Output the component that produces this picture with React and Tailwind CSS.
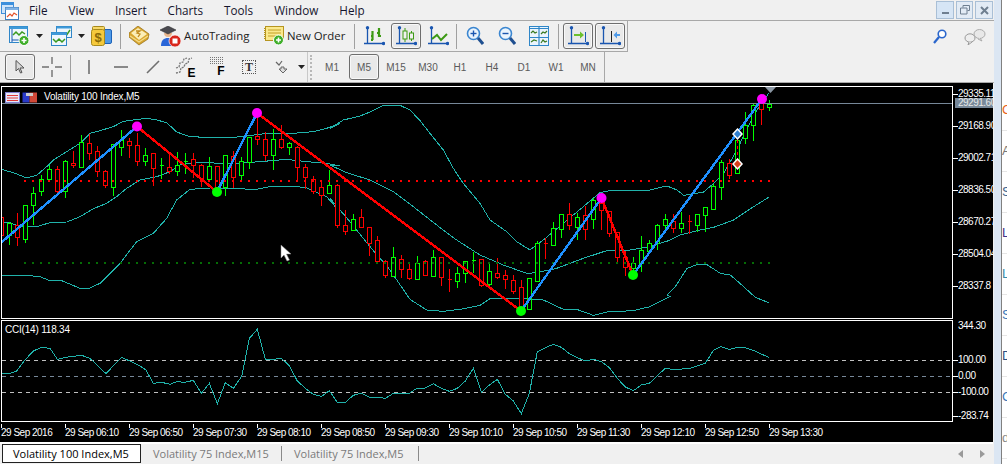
const UI_FONT = "font-['Open_Sans','Noto_Sans',sans-serif]";
const AXIS_FONT = "font-['Liberation_Sans',Arial,sans-serif]";

// chart data was read off 3x crops, so helpers map it back to page pixels
const zp = (pts, ox, oy) => pts.map(([x, y]) => `${ox + x / 3},${oy + y / 3}`).join(" ");

const candleRows = [
  ["r", 352, 352, 404, 404], ["g", 364, 370, 404, 432], ["r", 336, 374, 412, 434], ["g", 312, 314, 416, 426],
  ["g", 258, 280, 314, 372], ["g", 222, 238, 274, 284], ["g", 192, 208, 236, 240], ["r", 196, 208, 274, 280],
  ["g", 176, 184, 274, 290], ["r", 150, 188, 194, 200], ["g", 102, 126, 200, 200], ["r", 100, 130, 160, 176],
  ["r", 136, 154, 212, 228], ["r", 208, 214, 254, 260], ["g", 128, 132, 262, 286], ["g", 88, 120, 142, 164],
  ["r", 112, 122, 136, 170], ["r", 96, 134, 184, 194], ["g", 142, 164, 184, 196], ["r", 160, 160, 204, 254],
  ["g", 170, 196, 200, 234], ["r", 160, 200, 212, 218], ["g", 154, 196, 212, 226], ["g", 156, 182, 186, 220],
  ["r", 156, 178, 196, 230], ["r", 190, 196, 234, 258], ["g", 168, 198, 236, 240], ["r", 198, 198, 262, 270],
  ["g", 162, 166, 260, 284], ["r", 150, 168, 230, 262], ["g", 168, 182, 224, 240], ["g", 108, 110, 186, 204],
  ["r", 40, 108, 116, 132], ["r", 94, 118, 166, 180], ["g", 84, 118, 164, 206], ["r", 72, 118, 142, 144],
  ["g", 124, 130, 140, 162], ["r", 134, 140, 202, 244], ["r", 190, 202, 232, 264], ["r", 224, 236, 272, 278],
  ["r", 238, 262, 284, 316], ["g", 208, 256, 280, 280], ["r", 250, 256, 374, 380],
  ["r", 328, 376, 392, 402], ["g", 340, 356, 390, 390], ["r", 324, 350, 382, 382], ["r", 378, 382, 428, 464],
  ["r", 406, 420, 484, 484], ["r", 478, 482, 526, 532], ["g", 438, 472, 528, 528], ["r", 462, 476, 508, 530],
  ["r", 490, 508, 534, 538], ["g", 466, 490, 536, 536], ["r", 478, 484, 524, 526], ["g", 446, 472, 528, 528],
  ["r", 468, 472, 532, 556], ["r", 504, 538, 541, 572], ["g", 498, 520, 544, 562], ["g", 482, 484, 518, 546],
  ["g", 452, 480, 482, 516], ["r", 478, 478, 554, 558], ["g", 488, 514, 552, 556], ["r", 472, 518, 530, 534],
  ["r", 506, 526, 536, 564], ["r", 522, 540, 572, 578], ["r", 536, 562, 624, 634], ["g", 532, 534, 626, 626],
  ["g", 420, 430, 542, 542], ["r", 412, 430, 434, 474], ["g", 364, 384, 436, 436], ["g", 340, 342, 386, 410],
  ["r", 306, 342, 376, 386], ["g", 336, 350, 380, 418], ["r", 316, 346, 388, 416], ["g", 290, 300, 356, 384],
  ["r", 296, 310, 330, 388], ["r", 330, 332, 398, 408], ["r", 394, 396, 472, 488], ["r", 450, 472, 502, 526],
  ["g", 468, 490, 504, 516], ["g", 406, 450, 490, 512], ["g", 418, 428, 454, 458], ["g", 370, 376, 428, 446],
  ["g", 338, 358, 374, 388],
  ["r", 340, 362, 384, 396], ["g", 334, 370, 384, 396], ["r", 342, 362, 365, 398], ["g", 340, 342, 374, 392],
  ["g", 318, 320, 344, 392], ["g", 250, 258, 326, 326], ["g", 176, 186, 262, 296], ["r", 174, 190, 224, 234],
  ["g", 118, 120, 220, 220], ["g", 32, 76, 114, 128], ["g", 10, 16, 76, 120], ["r", 6, 6, 28, 72],
  ["g", -3, 12, 22, 30],
];

const bands = [
  [[4, 208], [40, 218], [80, 234], [110, 226], [140, 200], [160, 180], [200, 155], [240, 130], [270, 100], [300, 92], [340, 80], [370, 64], [400, 60], [440, 55], [470, 60], [500, 68], [530, 96], [570, 110], [620, 112], [700, 112], [740, 108], [800, 100], [880, 100], [940, 95], [980, 85], [1020, 70]],
  [[4, 366], [30, 368], [60, 380], [110, 380], [150, 368], [200, 366], [240, 350], [280, 326], [320, 310], [350, 290], [380, 265], [420, 240], [470, 230], [510, 215], [540, 195], [580, 188], [700, 190], [780, 185], [860, 178], [920, 185], [980, 190], [1020, 198]],
  [[4, 526], [40, 528], [80, 526], [120, 530], [150, 542], [180, 540], [240, 565], [270, 564], [300, 550], [360, 490], [410, 425], [460, 400], [500, 355], [530, 300], [570, 268], [630, 264], [700, 266], [770, 268], [810, 260], [880, 258], [920, 264], [980, 290], [1010, 325], [1020, 345]],
];
const bandsMid = [
  [[0, 85], [40, 60], [90, 48], [120, 36], [160, 16], [210, 16], [240, 30], [270, 62], [300, 100], [340, 150], [370, 205], [400, 250], [450, 310], [480, 360], [530, 395], [560, 425], [600, 450], [640, 420], [700, 370], [760, 320], [810, 278], [850, 270], [960, 270], [1000, 260], [1020, 260]],
  [[0, 195], [50, 218], [120, 240], [190, 275], [250, 320], [320, 375], [380, 420], [450, 465], [520, 495], [590, 520], [620, 518], [680, 505], [760, 475], [830, 452], [900, 450], [960, 440], [1020, 420]],
  [[0, 295], [60, 365], [120, 440], [180, 510], [240, 598], [290, 630], [340, 634], [390, 628], [450, 616], [480, 596], [530, 596], [590, 596], [640, 600], [700, 628], [740, 628], [790, 646], [830, 636], [910, 632], [960, 620], [1020, 590]],
];
const bandsEnd = [
  [[0, 258], [30, 270], [50, 286], [110, 276], [140, 250], [170, 220], [210, 150], [240, 85], [270, 30], [305, -20]],
  [[0, 425], [40, 405], [90, 392], [140, 382], [200, 360], [260, 320], [305, 292]],
  [[0, 585], [25, 560], [60, 505], [90, 494], [120, 494], [160, 520], [190, 525], [230, 560], [265, 592], [305, 608]],
];

const cci = [
  zp([[5, 176], [30, 175], [50, 168], [75, 135], [100, 108], [125, 97], [150, 100], [172, 133], [196, 127], [245, 121], [270, 130], [318, 176], [345, 147], [365, 127], [415, 150], [438, 165], [460, 205], [485, 202], [510, 208], [530, 200], [555, 202], [580, 196], [604, 235], [628, 205], [652, 266], [676, 203], [700, 220], [725, 184], [748, 70], [772, 43], [796, 133], [820, 133], [844, 130], [868, 152], [892, 198], [916, 220], [940, 238], [965, 244], [988, 227]], 0, 315),
  zp([[0, 230], [22, 262], [46, 262], [70, 241], [94, 234], [118, 246], [142, 246], [166, 250], [190, 235], [238, 235], [262, 219], [286, 219], [310, 206], [334, 220], [358, 229], [382, 220], [406, 198], [430, 160], [454, 232], [478, 210], [502, 193], [526, 238], [550, 258], [574, 296], [598, 235], [622, 110], [646, 98], [670, 88], [694, 97], [718, 116], [742, 128], [766, 138], [790, 133], [814, 140], [838, 158], [862, 190], [886, 216], [910, 227], [934, 210], [958, 205], [982, 182], [1006, 160]], 330, 315),
  zp([[20, 164], [70, 160], [115, 145], [140, 105], [162, 95], [187, 103], [211, 97], [235, 98], [259, 106], [283, 117], [305, 127]], 667, 315),
].join(" ");

function Candle({ n, row }) {
  const [c, hi, top, bot, lo] = row;
  const x = 1 + 8 * n + 0.5;
  const color = c === "g" ? "#00ff00" : "#ff0000";
  const y = (v) => Math.round(100 + v / 3) + 0.5;
  return (
    <g stroke={color} fill="#000" strokeWidth="1">
      <line x1={x} x2={x} y1={y(hi)} y2={y(lo)} />
      {bot - top < 6 ? (
        <line x1={x - 2} x2={x + 2} y1={y(top)} y2={y(top)} />
      ) : (
        <rect x={x - 2} y={y(top)} width="4" height={y(bot) - y(top)} />
      )}
    </g>
  );
}

function MainChart() {
  const dots = [[137, 126.5, "#ff00ff"], [257, 113, "#ff00ff"], [601.5, 198, "#ff00ff"], [762, 99, "#ff00ff"], [217, 192, "#00ff00"], [521, 311, "#00ff00"], [633, 275, "#00ff00"]];
  return (
    <svg width="950" height="231" viewBox="2 87 950 231" className="block">
      <g stroke="#20b2aa" fill="none" strokeWidth="1" shapeRendering="crispEdges">
        {bands.map((b, i) => (
          <polyline key={i} points={`${zp(b, 0, 100)} ${zp(bandsMid[i], 330, 100)} ${zp(bandsEnd[i], 667, 100)}`} />
        ))}
      </g>
      <g shapeRendering="crispEdges">
        {candleRows.map((row, n) => <Candle key={n} n={n} row={row} />)}
        <line x1="24" x2="772" y1="181" y2="181" stroke="#ff0000" strokeWidth="2" strokeDasharray="2 6" />
        <line x1="24" x2="772" y1="263" y2="263" stroke="#056b05" strokeWidth="2" strokeDasharray="2 6" />
        <line x1="2" x2="952" y1="103.5" y2="103.5" stroke="#778899" />
        <line x1="737.5" x2="737.5" y1="134" y2="164" stroke="#ff0000" strokeDasharray="3 3" />
      </g>
      <g fill="none" strokeWidth="2.4" shapeRendering="crispEdges">
        <polyline stroke="#1e90ff" points="0,243.5 137,126.5" />
        <polyline stroke="#1e90ff" points="217,192 257,113" />
        <polyline stroke="#1e90ff" points="521,311 601.5,198" />
        <polyline stroke="#1e90ff" points="633,275 762,99" />
        <polyline stroke="#ff0000" points="137,126.5 217,192" />
        <polyline stroke="#ff0000" points="257,113 521,311" />
        <polyline stroke="#ff0000" points="601.5,198 633,275" />
      </g>
      {dots.map(([x, y, c]) => <circle key={x} cx={x} cy={y} r="5" fill={c} />)}
      <polygon points="737.5,129 742,134 737.5,139 733,134" fill="#2f7fd0" stroke="#fff" strokeWidth="1.5" />
      <polygon points="737.5,159 742,164 737.5,169 733,164" fill="#d8401c" stroke="#fff" strokeWidth="1.5" />
      <polygon points="765,87 776,87 770.5,93" fill="#8a96a3" />
      <polygon points="281,245 281,258 284,255 287,261 289.5,260 286.5,254 291,254" fill="#fff" stroke="#888" strokeWidth="0.5" />
    </svg>
  );
}

function CciChart() {
  return (
    <svg width="950" height="100" viewBox="2 321 950 100" className="block">
      <g strokeDasharray="4 4" strokeWidth="1" shapeRendering="crispEdges">
        <line x1="2" x2="952" y1="360.5" y2="360.5" stroke="#c0c0c0" />
        <line x1="2" x2="952" y1="376.5" y2="376.5" stroke="#778899" />
        <line x1="2" x2="952" y1="392.5" y2="392.5" stroke="#c0c0c0" />
      </g>
      <polyline points={cci} fill="none" stroke="#20b2aa" strokeWidth="1" shapeRendering="crispEdges" />
    </svg>
  );
}

function PriceLabel({ children }) {
  return (
    <div className="flex items-center h-[32px]">
      <div className="w-[5px] h-px bg-white shrink-0" />
      <span className="whitespace-nowrap">{children}</span>
    </div>
  );
}

function SubLabel({ children, tick, className = "" }) {
  return (
    <div className={`flex items-center h-[16px] ${className}`}>
      <div className={`w-[5px] h-px shrink-0 ${tick ? "bg-white" : ""}`} />
      <span className="whitespace-nowrap">{children}</span>
    </div>
  );
}

const times = ["2016", "06:10", "06:50", "07:30", "08:10", "08:50", "09:30", "10:10", "10:50", "11:30", "12:10", "12:50", "13:30"];

/* ---- icons ---- */
function Logo() {
  return (
    <svg width="18" height="18" viewBox="0 0 18 18">
      <rect x="0.5" y="0.5" width="12" height="11" fill="#cfe4fa" stroke="#3d8fdc" />
      <rect x="0.5" y="0.5" width="12" height="2.5" fill="#3d8fdc" />
      <rect x="4.5" y="5.5" width="13" height="12" fill="#fff" stroke="#3d7fc0" />
      <rect x="4.5" y="5.5" width="13" height="2.5" fill="#7fb2e5" />
      <path d="M6 15l3-3 2 2 2-3 3 2" fill="none" stroke="#e2522a" strokeWidth="1.2" />
    </svg>
  );
}

function PlusBadge({ cx, cy, r = 5 }) {
  return (
    <g>
      <circle cx={cx} cy={cy} r={r} fill="#3fae2a" stroke="#fff" />
      <path d={`M${cx - 2.5} ${cy}h5M${cx} ${cy - 2.5}v5`} stroke="#fff" strokeWidth="1.6" />
    </g>
  );
}

function NewChartIcon() {
  return (
    <svg width="21" height="20" viewBox="0 0 21 20">
      <rect x="0.5" y="0.5" width="18" height="16" fill="#eef6fd" stroke="#2f86c8" />
      <rect x="0.5" y="0.5" width="18" height="2.5" fill="#3f9ad8" />
      <path d="M3 3v13M3 14h14" stroke="#1a56b0" fill="none" />
      <path d="M4 9l3-3 3 3 3-3 3 2" stroke="#3a9a20" strokeWidth="1.5" fill="none" />
      <PlusBadge cx={15} cy={14.5} />
    </svg>
  );
}

function ProfilesIcon() {
  return (
    <svg width="21" height="20" viewBox="0 0 21 20">
      <rect x="5.5" y="0.5" width="15" height="11" fill="#eef6fd" stroke="#2f86c8" />
      <rect x="5.5" y="0.5" width="15" height="2" fill="#3f9ad8" />
      <path d="M12 8l3 2 4-6" stroke="#3a9a20" strokeWidth="1.4" fill="none" />
      <rect x="0.5" y="6.5" width="15" height="13" fill="#eef6fd" stroke="#2f86c8" />
      <rect x="0.5" y="6.5" width="15" height="2.5" fill="#3f9ad8" />
      <path d="M2 13l3 3 3-3 3 3 3-3" stroke="#3a9a20" strokeWidth="1.5" fill="none" />
    </svg>
  );
}

function MarketIcon() {
  return (
    <svg width="21" height="20" viewBox="0 0 21 20">
      <rect x="9.5" y="3.5" width="11" height="14" rx="1.5" fill="#4f9ae8" stroke="#1c62b8" />
      <rect x="1.5" y="0.5" width="12" height="4" rx="1" fill="#f7d96a" stroke="#a88a1c" />
      <rect x="0.5" y="3.5" width="13" height="16" rx="2" fill="#f5c93c" stroke="#a88a1c" />
      <text x="7" y="16" textAnchor="middle" fontSize="13" fontWeight="700" fontFamily="Liberation Sans" fill="#8a6a08">$</text>
    </svg>
  );
}

function BookIcon() {
  return (
    <svg width="21" height="20" viewBox="0 0 21 20">
      <polygon points="0,7 9,0 20,8 19,13 10,19 0,11" fill="#d9a62e" stroke="#8f6a14" strokeWidth="0.7" />
      <polygon points="2,7 9,2 18,8 10,14" fill="#fbeeb8" />
      <path d="M7 5h4l-3 2 3 1-2 3" fill="none" stroke="#c08a1c" strokeWidth="1.3" />
      <path d="M1 10l9 6 9-6" fill="none" stroke="#f3dc8a" strokeWidth="1.3" />
    </svg>
  );
}

function AutoTradingIcon() {
  return (
    <svg width="21" height="21" viewBox="0 0 21 21">
      <path d="M1 20c0-6 3-8 7-8s6 2 6 8z" fill="#2a66d8" />
      <path d="M8 11c-3 0-4-2-4-4h8c0 2-1 4-4 4z" fill="#e9b78e" />
      <polygon points="0,4 8,0 16,4 8,8" fill="#4a4a50" stroke="#222" strokeWidth="0.5" />
      <circle cx="15" cy="15" r="6" fill="#d8261c" stroke="#fff" strokeWidth="0.7" />
      <rect x="12.5" y="12.5" width="5" height="5" fill="#fff" />
    </svg>
  );
}

function NewOrderIcon() {
  return (
    <svg width="21" height="20" viewBox="0 0 21 20">
      <rect x="1.5" y="0.5" width="18" height="14" fill="#fbe98c" stroke="#b69520" />
      <path d="M0 2v11" stroke="#b69520" strokeWidth="2" strokeDasharray="1 1" />
      <path d="M4 4h13M4 7h13M4 10h9" stroke="#c2a028" />
      <PlusBadge cx={14.5} cy={14} />
    </svg>
  );
}

function Axes() {
  return (
    <g fill="#1a56b0">
      <path d="M3.5 1v17M0 17.5h20" stroke="#1a56b0" strokeWidth="1.3" fill="none" />
      <circle cx="3.5" cy="1.7" r="1.7" />
      <circle cx="19.5" cy="17.5" r="1.7" />
    </g>
  );
}

function BarIcon() {
  return (
    <svg width="21" height="20" viewBox="0 0 21 20">
      <Axes />
      <path d="M8.5 5v9M15 2v9M7 14h2M7 10h2M13 7h2M15 10h2" stroke="#3c9a14" strokeWidth="2.2" fill="none" />
    </svg>
  );
}

function CandleIcon() {
  return (
    <svg width="21" height="20" viewBox="0 0 21 20">
      <Axes />
      <path d="M9 2v14M15.5 5v10" stroke="#3c9a14" />
      <rect x="7" y="5" width="4" height="8" fill="#f0f0f0" stroke="#3c9a14" />
      <rect x="13.5" y="7" width="4" height="6" fill="#f0f0f0" stroke="#3c9a14" />
    </svg>
  );
}

function LineIcon() {
  return (
    <svg width="21" height="20" viewBox="0 0 21 20">
      <Axes />
      <path d="M4 13l5-4 4 5 6-6" stroke="#3c9a14" strokeWidth="2" fill="none" />
    </svg>
  );
}

function ZoomIcon({ plus }) {
  return (
    <svg width="18" height="20" viewBox="0 0 18 20">
      <circle cx="7.5" cy="7.5" r="6" fill="#eaf4fd" stroke="#3b86d0" strokeWidth="1.6" />
      <path d="M4.5 7.5h6" stroke="#1a56b0" strokeWidth="1.4" />
      {plus && <path d="M7.5 4.5v6" stroke="#1a56b0" strokeWidth="1.4" />}
      <path d="M12 12l5 6" stroke="#1f4f90" strokeWidth="3" />
    </svg>
  );
}

function TileIcon() {
  return (
    <svg width="20" height="20" viewBox="0 0 20 20">
      <rect x="0.5" y="0.5" width="19" height="19" fill="#eaf4fd" stroke="#2f86c8" />
      <path d="M0 2.5h20M0 11.5h20M10 0v20" stroke="#2f86c8" strokeWidth="1.2" />
      <path d="M2 7l2-2 2 2 2-1M12 8l2-2 2 1 2-2M2 16l3-2 3 1M12 17l2-3 2 2 2-1" stroke="#3a7a20" strokeWidth="1.2" fill="none" />
    </svg>
  );
}

function AutoScrollIcon() {
  return (
    <svg width="21" height="20" viewBox="0 0 21 20">
      <Axes />
      <path d="M17.5 6v10" stroke="#1a56b0" />
      <path d="M6 8h6V5.5l4 3.5-4 3.5V10H6z" fill="#6cc02c" />
    </svg>
  );
}

function ShiftIcon() {
  return (
    <svg width="21" height="20" viewBox="0 0 21 20">
      <Axes />
      <path d="M11.5 5v11" stroke="#222" />
      <path d="M20 8h-3V5.5L13.5 9l3.500 3.500V10h3z" fill="#4f9ae8" />
    </svg>
  );
}

function CursorTool() {
  return (
    <svg width="10" height="14" viewBox="0 0 10 14">
      <polygon points="1,0.5 1,11 3.500,8.500 5.500,13 7,12.500 5,8 9,8" fill="#d8d8d8" stroke="#555" />
    </svg>
  );
}

function CrossTool() {
  return (
    <svg width="20" height="20" viewBox="0 0 20 20">
      <path d="M10 0v7M10 13v7M0 10h7M13 10h7" stroke="#707070" strokeWidth="1.4" />
    </svg>
  );
}

function GreyLine({ d }) {
  return (
    <svg width="14" height="14" viewBox="0 0 14 14">
      <path d={d} stroke="#707070" strokeWidth="1.6" fill="none" />
    </svg>
  );
}

function FiboChannel() {
  return (
    <span className="relative block w-[21px] h-[20px]">
      <svg width="18" height="18" viewBox="0 0 18 18">
        <path d="M1 16l4-1 1-4 3-1 1-3 3-1 1-4 3-1" stroke="#777" strokeWidth="1.3" fill="none" strokeDasharray="2 1" />
        <path d="M1 11l3-1 1-4 3-1 1-3 3-1" stroke="#777" strokeWidth="1.3" fill="none" strokeDasharray="2 1" />
      </svg>
      <span className={`absolute right-0 bottom-[-2px] text-[12px] font-bold leading-none text-black ${AXIS_FONT}`}>E</span>
    </span>
  );
}

function FiboF() {
  const dots = [];
  for (let y = 0; y < 4; y++) for (let x = 0; x < 7; x++) dots.push(<rect key={`${x}-${y}`} x={x * 2} y={y * 2} width="1" height="1" fill="#777" />);
  return (
    <span className="relative block w-[15px] h-[20px]">
      <svg width="14" height="9" viewBox="0 0 14 9">{dots}</svg>
      <span className={`absolute right-0 bottom-0 text-[12px] font-bold leading-none text-black ${AXIS_FONT}`}>F</span>
    </span>
  );
}

function TextTool() {
  return (
    <span className="flex items-center justify-center w-[14px] h-[14px] border border-dotted border-[#555] text-[12px] font-bold leading-none text-[#333] font-['Liberation_Serif',serif]">T</span>
  );
}

function ArrowsTool() {
  return (
    <svg width="13" height="14" viewBox="0 0 13 14">
      <path d="M1 2l3 3 3-4" stroke="#666" strokeWidth="1.2" fill="none" />
      <path d="M6 7h3v2h3l-4 4-4-4h2z" fill="#ddd" stroke="#666" />
    </svg>
  );
}

function Caret() {
  return (
    <svg width="7" height="4" viewBox="0 0 7 4">
      <polygon points="0,0 7,0 3.500,4" fill="#222" />
    </svg>
  );
}

function SearchIcon() {
  return (
    <svg width="14" height="15" viewBox="0 0 14 15">
      <circle cx="9" cy="5" r="3.800" fill="#fff" stroke="#2a66cc" strokeWidth="1.6" />
      <path d="M6 8l-5 6" stroke="#2a66cc" strokeWidth="2.2" />
    </svg>
  );
}

function ChatIcon() {
  return (
    <svg width="22" height="16" viewBox="0 0 22 16">
      <ellipse cx="15.500" cy="5" rx="5.500" ry="4.500" fill="#e8e8e8" stroke="#aaa" />
      <path d="M16 9l2 3-4-2" fill="#e8e8e8" stroke="#aaa" />
      <ellipse cx="6" cy="9" rx="5" ry="4.200" fill="#eee" stroke="#999" />
      <path d="M5 13l-1 3 4-3" fill="#eee" stroke="#999" />
    </svg>
  );
}

/* ---- toolbar parts ---- */
function Slot({ active, children }) {
  return (
    <button className="flex items-center justify-center w-[32px] h-[26px] shrink-0">
      <span className={`flex items-center justify-center w-[30px] h-[26px] rounded-[3px] ${active ? "border border-[#6e6e6e] bg-[#e9e9e9] shadow-[inset_0_0_0_1px_#f8f8f8]" : ""}`}>
        {children}
      </span>
    </button>
  );
}

function Sep({ className = "" }) {
  return <div className={`w-px h-[25px] bg-[#a0a0a0] shrink-0 ${className}`} />;
}

function CaretSlot({ className = "" }) {
  return <div className={`flex items-center justify-center w-[8px] shrink-0 ${className}`}><Caret /></div>;
}

function Tf({ label, active }) {
  return (
    <Slot active={active}>
      <span className={`text-[10px] text-[#5a5a5a] ${AXIS_FONT}`}>{label}</span>
    </Slot>
  );
}

const rightLetters = [
  ["C", "text-[#e8651a]"], ["A", "text-[#777]"], ["S", "text-[#41648c]"], ["L", "text-[#43348a]"], ["L", "text-[#3a8aa8]"],
  ["S", "text-[#3c78b8]"], ["D", "text-[#2f4f80]"], ["C", "text-[#3c78b8]"], ["d", "text-[#8a8a8a]"],
];

export default function App() {
  return (
    <div className={`flex w-[1007px] h-[464px] overflow-hidden bg-white ${UI_FONT}`}>
      <div className="flex flex-col w-[994px] shrink-0 bg-[#f0f0f0]">
        {/* menu */}
        <div className="flex items-center h-[20px] shrink-0">
          <div className="w-[18px] pl-[1px] pt-[1px] shrink-0"><Logo /></div>
          <div className="flex ml-[0.5px] text-[11.7px] text-[#15152e]">
            {["File", "View", "Insert", "Charts", "Tools", "Window", "Help"].map((m) => (
              <span key={m} className="px-[10.5px] leading-[20px]">{m}</span>
            ))}
          </div>
          <div className="flex ml-auto mr-[1px] gap-[2px]">
            <button className="flex items-center justify-center w-[18px] h-[18px] bg-[#d6e5f5] border border-[#a9bfd6]"><span className="block w-[7px] h-[2px] mt-[6px] bg-[#6f7f90]" /></button>
            <button className="flex items-center justify-center w-[17px] h-[18px] bg-[#e2ebf5] border border-[#a9bfd6]">
              <svg width="10" height="10" viewBox="0 0 10 10"><path d="M3 2.500V.5h6.500v5H7.500M.5 3h6.500v6H.5z" fill="none" stroke="#6f7f90" /></svg>
            </button>
            <button className="flex items-center justify-center w-[18px] h-[18px] bg-[#e2ebf5] border border-[#a9bfd6]">
              <svg width="9" height="9" viewBox="0 0 9 9"><path d="M1 1l7 7M8 1L1 8" stroke="#6f7f90" strokeWidth="2" /></svg>
            </button>
          </div>
        </div>
        <div className="h-px bg-[#a8a8a8] shrink-0" />

        {/* first toolbar */}
        <div className="flex h-[31px] shrink-0">
          <div className="flex items-center w-[628px] h-[31px] border-b border-r border-[#a8a8a8] pl-[3px] text-[11.4px] text-[#222]">
            <Slot><NewChartIcon /></Slot>
            <CaretSlot />
            <div className="w-[2px]" />
            <Slot><ProfilesIcon /></Slot>
            <CaretSlot />
            <Slot><MarketIcon /></Slot>
            <Sep className="ml-[3px] mr-[2px]" />
            <Slot><BookIcon /></Slot>
            <div className="flex items-center gap-[3px] w-[107px] pl-[5px] shrink-0"><AutoTradingIcon /><span className="whitespace-nowrap">AutoTrading</span></div>
            <div className="flex items-center gap-[2px] w-[90px] pl-[2px] shrink-0"><NewOrderIcon /><span className="whitespace-nowrap">New Order</span></div>
            <Sep className="ml-[2px] mr-[3px]" />
            <Slot><BarIcon /></Slot>
            <Slot active><CandleIcon /></Slot>
            <Slot><LineIcon /></Slot>
            <Sep className="ml-[2px] mr-[2px]" />
            <Slot><ZoomIcon plus /></Slot>
            <Slot><ZoomIcon /></Slot>
            <Slot><TileIcon /></Slot>
            <Sep className="ml-[3px] mr-[3px]" />
            <Slot active><AutoScrollIcon /></Slot>
            <Slot active><ShiftIcon /></Slot>
          </div>
          <div className="flex items-center ml-auto mr-[8px] gap-[17px]">
            <SearchIcon />
            <ChatIcon />
          </div>
        </div>

        {/* second toolbar */}
        <div className="h-[31px] shrink-0 border-b border-[#a8a8a8]">
          <div className="flex items-center w-[605px] h-[30px] border-r border-[#a8a8a8] pl-[4px]">
            <Slot active><CursorTool /></Slot>
            <Slot><CrossTool /></Slot>
            <Sep className="ml-[2px] mr-[2px]" />
            <Slot><GreyLine d="M7 0v14" /></Slot>
            <Slot><GreyLine d="M0 7h14" /></Slot>
            <Slot><GreyLine d="M1 13L13 1" /></Slot>
            <Slot><FiboChannel /></Slot>
            <Slot><FiboF /></Slot>
            <Slot><TextTool /></Slot>
            <Slot><ArrowsTool /></Slot>
            <CaretSlot />
            <div className="w-px h-[30px] ml-[2px] bg-[#c8c8c8] shrink-0" />
            <div className="w-[2px] h-[25px] ml-[2px] mr-[4px] shrink-0 border-l-2 border-dotted border-[#b8b8b8]" />
            {["M1", "M5", "M15", "M30", "H1", "H4", "D1", "W1", "MN"].map((t) => <Tf key={t} label={t} active={t === "M5"} />)}
          </div>
        </div>

        {/* chart panel */}
        <div className={`w-[993px] h-[359px] shrink-0 bg-black pt-[3px] overflow-hidden text-[10px] leading-[12px] tracking-[-0.5px] text-white ${AXIS_FONT}`}>
          <div className="flex">
            <div className="relative w-[952px] h-[233px] ml-px shrink-0 border border-white">
              <MainChart />
              <div className="absolute left-[3px] top-[4px] flex items-center">
                <svg width="33" height="11" viewBox="0 0 33 11">
                  <rect x="0.5" y="0.5" width="14" height="10" fill="#e8e8f8" stroke="#8080d0" />
                  <path d="M2 3.500h11M2 6h11M2 8.500h11" stroke="#e03838" />
                  <rect x="17.5" y="0.5" width="7" height="10" fill="#2a3ac8" />
                  <rect x="24.500" y="0.5" width="7.500" height="10" fill="#d04838" />
                  <rect x="21" y="1" width="7" height="3" fill="#ccc" />
                </svg>
                <span className="ml-[6px] tracking-[-0.2px]">Volatility 100 Index,M5</span>
              </div>
            </div>
            <div className="relative flex-1 min-w-0 overflow-hidden">
              <div className="flex flex-col -mt-[8px]">
                {["29335.11", "29168.90", "29002.71", "28836.50", "28670.27", "28504.04", "28337.8"].map((p) => <PriceLabel key={p}>{p}</PriceLabel>)}
              </div>
              <div className="absolute left-[2px] top-[12px] w-[40px] h-[10px] bg-[#778899] pl-[3px] leading-[10px] whitespace-nowrap text-[#e8e8e8]">29291.60</div>
            </div>
          </div>

          <div className="flex mt-px">
            <div className="relative w-[952px] h-[102px] ml-px shrink-0 border border-white">
              <CciChart />
              <span className="absolute left-[3px] top-[3px] tracking-[-0.2px]">CCI(14) 118.34</span>
            </div>
            <div className="flex-1 min-w-0 overflow-hidden">
              <div className="flex flex-col -mt-[2px]">
                <SubLabel>344.30</SubLabel>
                <SubLabel tick className="mt-[18px]">100.00</SubLabel>
                <SubLabel tick>0.00</SubLabel>
                <SubLabel tick>-100.00</SubLabel>
                <SubLabel tick className="mt-[8px]">-283.74</SubLabel>
              </div>
            </div>
          </div>

          <div className="flex ml-px">
            {times.map((t) => (
              <div key={t} className="w-[64px] shrink-0">
                <div className="w-px h-[4px] bg-white" />
                <div className="whitespace-nowrap leading-[10px]">29 Sep {t}</div>
              </div>
            ))}
          </div>
        </div>
        <div className="h-[2px] w-[993px] bg-white shrink-0" />

        {/* tabs */}
        <div className="flex items-start h-[20px] text-[11px] leading-[18px] shrink-0">
          <div className="w-[139px] h-[19px] ml-[2px] pl-[10px] bg-white border border-[#222] text-black whitespace-nowrap">Volatility 100 Index,M5</div>
          <div className="pl-[12px] w-[141px] mt-[2px] border-r border-[#8a8a8a] text-[#7a7a7a] whitespace-nowrap leading-[15px]">Volatility 75 Index,M15</div>
          <div className="pl-[12px] w-[137px] mt-[2px] border-r border-[#8a8a8a] text-[#7a7a7a] whitespace-nowrap leading-[15px]">Volatility 75 Index,M5</div>
          <div className="flex ml-auto mr-[9px] mt-[6px] gap-[17px]">
            <svg width="5" height="8" viewBox="0 0 5 8"><polygon points="5,0 5,8 0,4" fill="#9a9a9a" /></svg>
            <svg width="5" height="8" viewBox="0 0 5 8"><polygon points="0,0 0,8 5,4" fill="#9a9a9a" /></svg>
          </div>
        </div>
      </div>

      {/* neighbouring window, only a sliver of it shows */}
      <div className="w-[7px] shrink-0 bg-[#dbe6f3]" />
      <div className="flex-1 min-w-0 pt-[90px] border-l border-[#808080] overflow-hidden text-[13px] font-['Liberation_Sans',sans-serif]">
        {rightLetters.map(([l, c], i) => (
          <div key={i} className={`h-[41px] flex items-center border-b border-[#e6e6e6] ${c}`}>{l}</div>
        ))}
      </div>
    </div>
  );
}
